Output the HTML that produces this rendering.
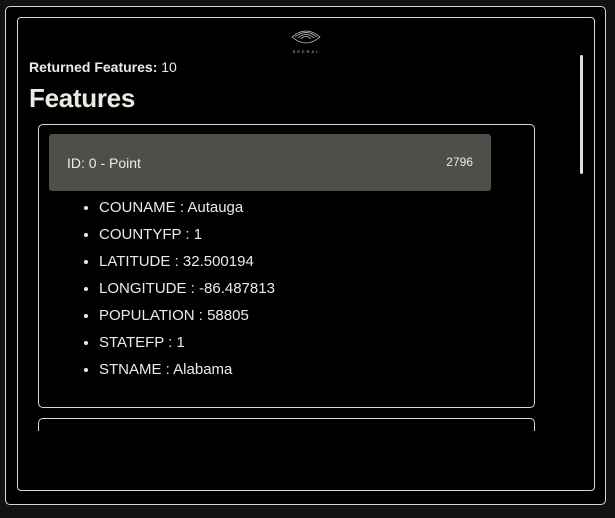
<!DOCTYPE html>
<html><head><style>
body{margin:0;width:615px;height:518px;background:#121212;overflow:hidden;font-family:"Liberation Sans",sans-serif;color:#ecebe3;position:relative}
.o{position:absolute;left:5px;top:6px;width:599px;height:497px;border:1px solid #d8d8d0;border-radius:5px;background:#000}
.i{position:absolute;left:17px;top:17px;width:576px;height:472px;border:1px solid #d8d8d0;border-radius:4px;background:#000;overflow:hidden}
.sb{position:absolute;left:580px;top:55px;width:3px;height:119px;background:#e0e0d8;border-radius:2px}
.rf{position:absolute;left:29px;top:59px;font-size:14px}
.h{position:absolute;left:29px;top:83px;font-size:26px;font-weight:bold;letter-spacing:-0.3px}
.c{position:absolute;left:38px;width:495px;border:1px solid #d8d8d0;border-radius:5px}
.hd{position:absolute;left:49px;top:134px;width:442px;height:57px;background:#4f4f4a;border-radius:3px;font-size:14px}
ul{position:absolute;left:59px;top:197px;margin:0;padding-left:40px;font-size:15px;list-style:disc}
li{height:27px;line-height:22px}
</style></head><body>
<div class="o"></div><div class="i"></div>
<svg style="position:absolute;left:289px;top:27px" width="34" height="28" viewBox="0 0 34 28">
<g fill="none" stroke="#ccc" stroke-width="0.8">
<path d="M3 10 Q17 -2 31 10 Q17 22 3 10Z"/><path d="M6 10 Q17 1 28 10"/><path d="M9 11 Q17 4 25 11"/><path d="M12 12 Q17 7 22 12"/>
</g><text x="17" y="26" font-size="4" fill="#ccc" text-anchor="middle" letter-spacing="2">SEERAI</text></svg>
<div class="sb"></div>
<div class="rf"><b>Returned Features:</b> 10</div>
<div class="h">Features</div>
<div class="c" style="top:124px;height:282px"></div>
<div class="c" style="top:418px;height:40px;border-bottom:none;clip-path:inset(0 0 28px 0)"></div>
<div class="hd"><span style="position:absolute;left:18px;top:21px">ID: 0 - Point</span><span style="position:absolute;right:18px;top:21px;font-size:12px">2796</span></div>
<ul><li>COUNAME : Autauga</li><li>COUNTYFP : 1</li><li>LATITUDE : 32.500194</li><li>LONGITUDE : -86.487813</li><li>POPULATION : 58805</li><li>STATEFP : 1</li><li>STNAME : Alabama</li></ul>
</body></html>
